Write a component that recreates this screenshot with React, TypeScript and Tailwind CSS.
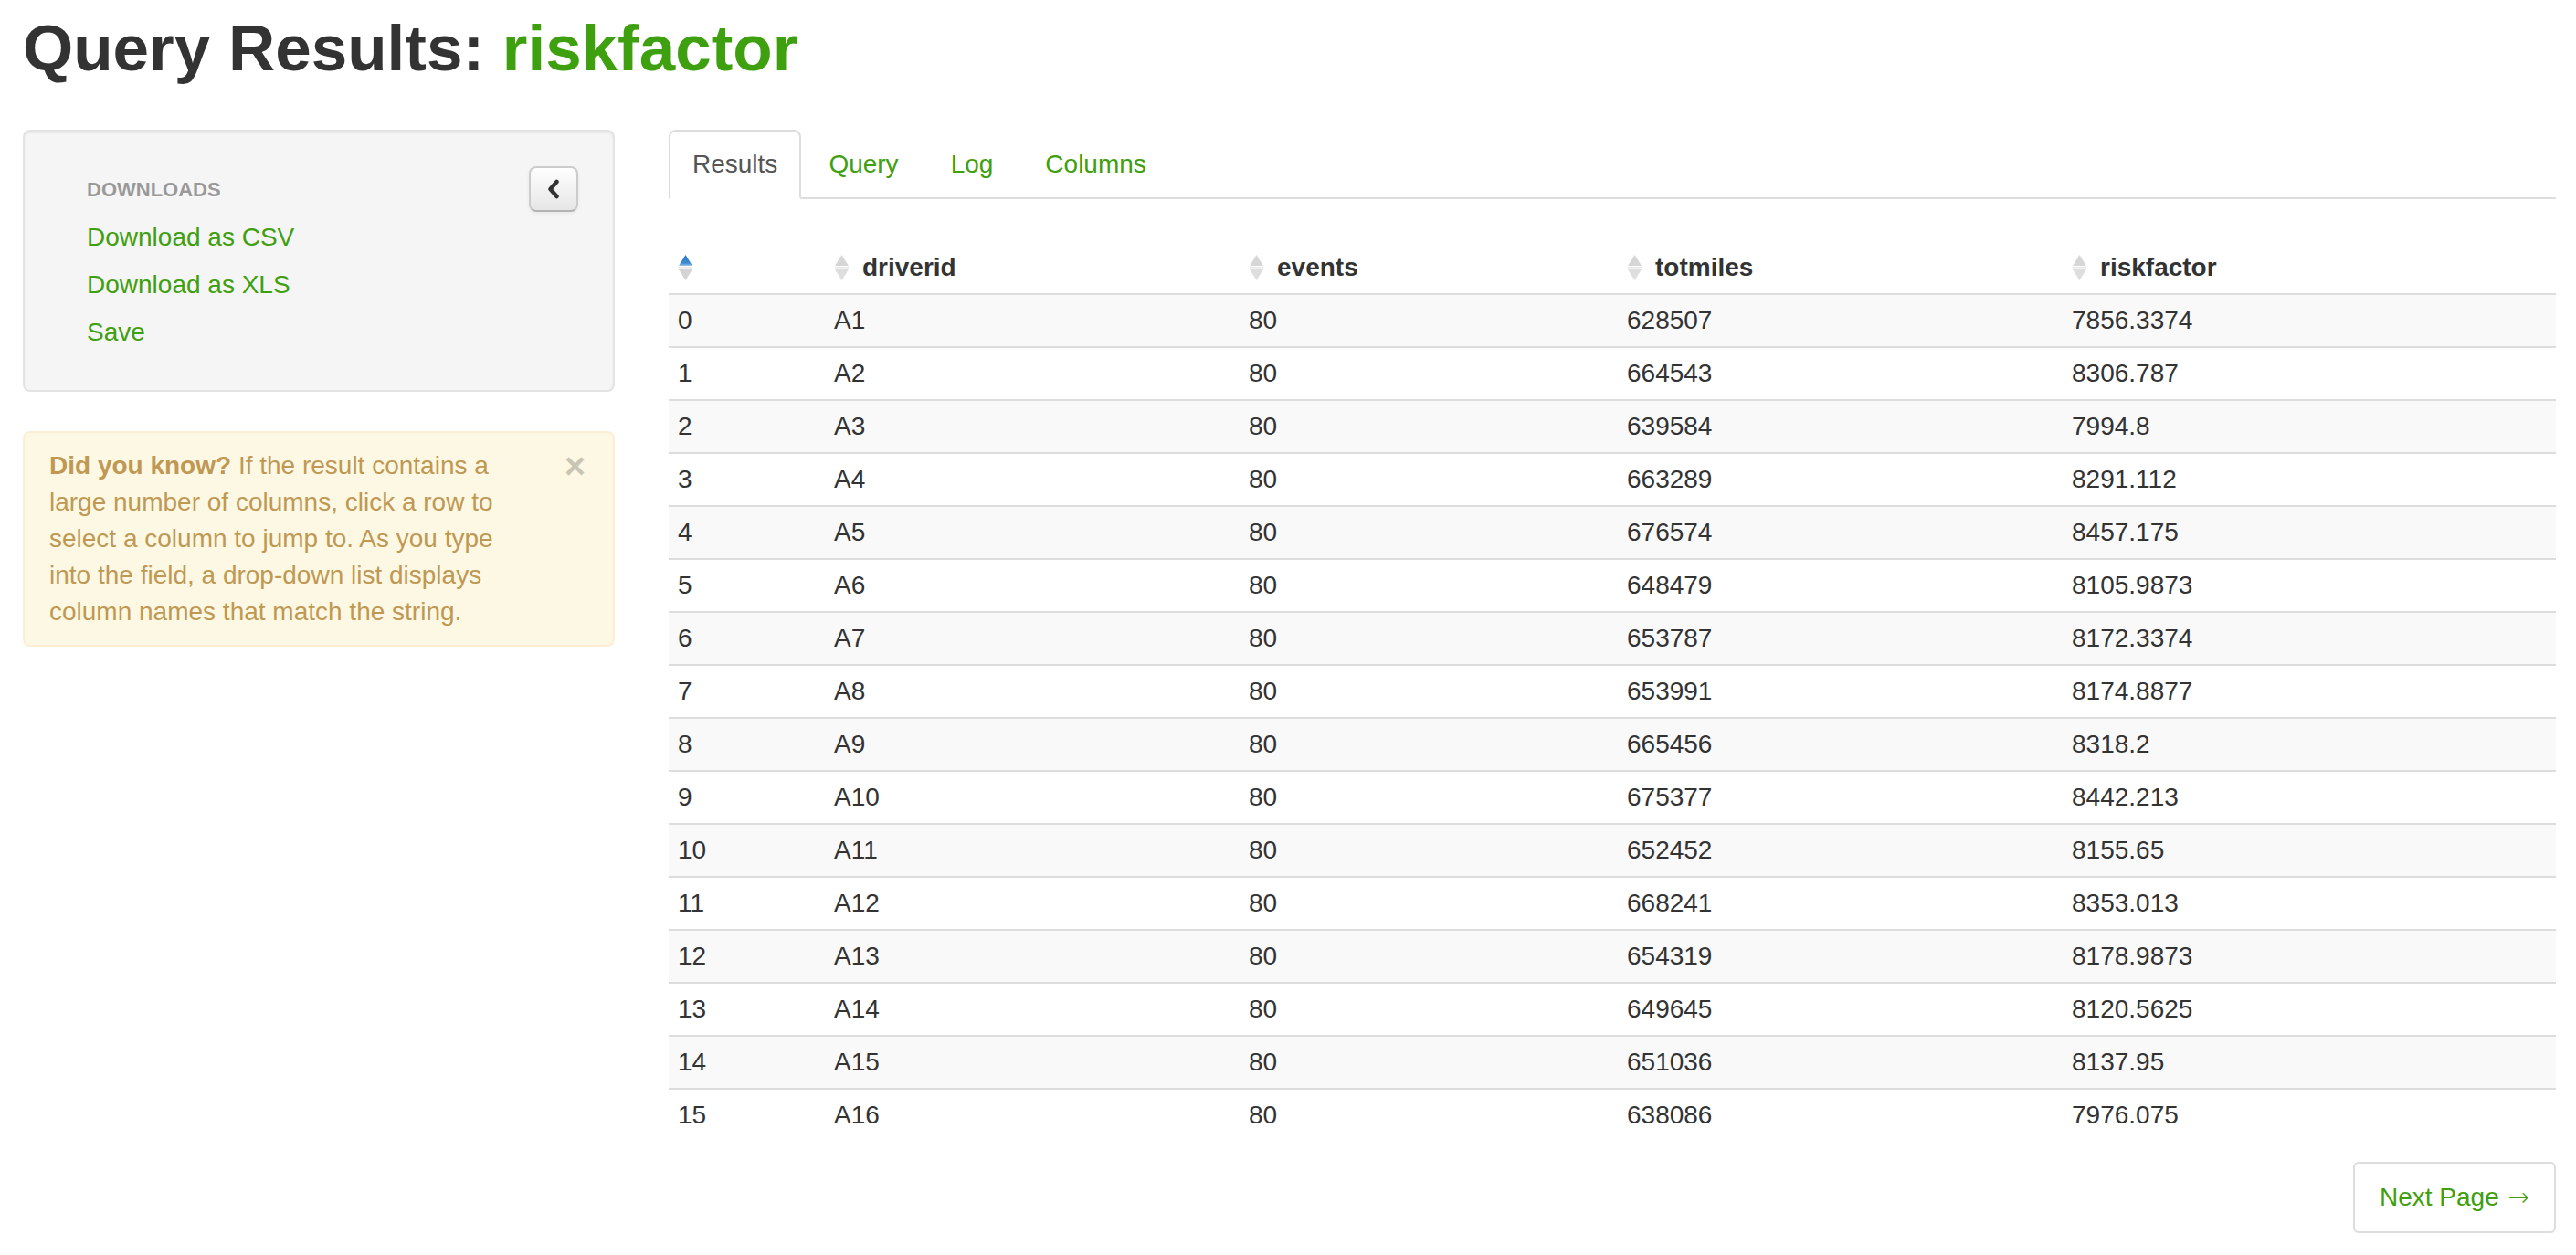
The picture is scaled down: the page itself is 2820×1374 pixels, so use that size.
import React from "react";

const green = "text-[#3fa00f]";

const rows = [
  ["A1", "80", "628507", "7856.3374"],
  ["A2", "80", "664543", "8306.787"],
  ["A3", "80", "639584", "7994.8"],
  ["A4", "80", "663289", "8291.112"],
  ["A5", "80", "676574", "8457.175"],
  ["A6", "80", "648479", "8105.9873"],
  ["A7", "80", "653787", "8172.3374"],
  ["A8", "80", "653991", "8174.8877"],
  ["A9", "80", "665456", "8318.2"],
  ["A10", "80", "675377", "8442.213"],
  ["A11", "80", "652452", "8155.65"],
  ["A12", "80", "668241", "8353.013"],
  ["A13", "80", "654319", "8178.9873"],
  ["A14", "80", "649645", "8120.5625"],
  ["A15", "80", "651036", "8137.95"],
  ["A16", "80", "638086", "7976.075"],
];

const SortIcon = ({ active }: { active?: boolean }) => (
  <svg width="17" height="30" viewBox="0 0 17 30" className="shrink-0">
    <defs>
      <linearGradient id="sortBlue" x1="0" y1="0" x2="0" y2="1">
        <stop offset="0" stopColor="#2a78bd" />
        <stop offset="0.75" stopColor="#3b8bd0" />
        <stop offset="1" stopColor="#9cc3e6" />
      </linearGradient>
    </defs>
    <polygon
      points="8.5,1 16,13 1,13"
      fill={active ? "url(#sortBlue)" : "#d6d6d6"}
    />
    <rect x="1" y="14" width="15" height="1.5" fill="#e6e6e6" />
    <polygon points="1,17 16,17 8.5,29" fill={active ? "#d4d4d4" : "#dedede"} />
  </svg>
);

const columns = [
  { name: "", w: "w-[171px]" },
  { name: "driverid", w: "w-[454px]" },
  { name: "events", w: "w-[414px]" },
  { name: "totmiles", w: "w-[487px]" },
  { name: "riskfactor", w: "" },
];

const App = () => {
  return (
    <div className="min-h-screen bg-white pl-[25px] pr-[22px] font-['Liberation_Sans',Arial,sans-serif] text-[#333] text-[28px] leading-[40px]">
      <h1 className="pt-[13px] text-[71px] leading-[80px] font-bold">
        Query Results: <span className={green}>riskfactor</span>
      </h1>

      <div className="mt-[49px] flex gap-[59px]">
        {/* Sidebar */}
        <div className="w-[648px] shrink-0">
          <div className="flex rounded-[8px] border-2 border-[#e3e3e3] bg-[#f5f5f5] pt-[38px] pb-[37px] pl-[38px] pr-[38px] shadow-[inset_0_2px_2px_rgba(0,0,0,0.05)]">
            <ul className="flex-1">
              <li className="px-[30px] py-[6px] text-[22px] font-bold uppercase text-[#999] [text-shadow:0_1px_0_rgba(255,255,255,0.5)]">
                Downloads
              </li>
              <li>
                <a href="#" className={`block px-[30px] py-[6px] ${green}`}>
                  Download as CSV
                </a>
              </li>
              <li>
                <a href="#" className={`block px-[30px] py-[6px] ${green}`}>
                  Download as XLS
                </a>
              </li>
              <li>
                <a href="#" className={`block px-[30px] py-[6px] ${green}`}>
                  Save
                </a>
              </li>
            </ul>
            <button className="flex h-[50px] w-[54px] shrink-0 items-center justify-center rounded-[8px] border-2 border-[#ccc] border-b-[#b3b3b3] bg-linear-to-b from-white to-[#e6e6e6] shadow-[inset_0_2px_0_rgba(255,255,255,0.2),0_2px_4px_rgba(0,0,0,0.05)]">
              <svg width="16" height="22" viewBox="0 0 16 22">
                <path
                  d="M11.5 3 L4.5 11 L11.5 19"
                  fill="none"
                  stroke="#333"
                  strokeWidth="4.5"
                  strokeLinecap="round"
                  strokeLinejoin="round"
                />
              </svg>
            </button>
          </div>

          <div className="relative mt-[43px] rounded-[8px] border-2 border-[#fbeed5] bg-[#fcf8e3] py-[16px] pl-[27px] pr-[70px] text-[#c09853]">
            <span className="absolute right-[30px] top-[16px] text-[40px] font-bold leading-[40px] text-black opacity-20">
              ×
            </span>
            <p className="whitespace-nowrap">
              <strong>Did you know?</strong> If the result contains a
              <br />
              large number of columns, click a row to
              <br />
              select a column to jump to. As you type
              <br />
              into the field, a drop-down list displays
              <br />
              column names that match the string.
            </p>
          </div>
        </div>

        {/* Main */}
        <div className="min-w-0 flex-1">
          <ul className="flex border-b-2 border-[#ddd]">
            <li className="-mb-[2px] mr-[4px]">
              <a
                href="#"
                className="block rounded-t-[8px] border-2 border-[#ddd] border-b-transparent bg-white px-[24px] py-[16px] text-[#555]"
              >
                Results
              </a>
            </li>
            {["Query", "Log", "Columns"].map((t) => (
              <li key={t} className="-mb-[2px] mr-[5px]">
                <a
                  href="#"
                  className={`block rounded-t-[8px] border-2 border-transparent px-[24px] py-[16px] ${green}`}
                >
                  {t}
                </a>
              </li>
            ))}
          </ul>

          <table className="mt-[47px] w-full table-fixed border-collapse">
            <thead>
              <tr>
                {columns.map((c, i) => (
                  <th
                    key={i}
                    className={`${c.w} px-[10px] py-[8px] text-left align-middle font-bold`}
                  >
                    <div className="flex items-center gap-[14px]">
                      <SortIcon active={i === 0} />
                      {c.name && <span>{c.name}</span>}
                    </div>
                  </th>
                ))}
              </tr>
            </thead>
            <tbody>
              {rows.map((r, i) => (
                <tr
                  key={i}
                  className={`border-t-2 border-[#ddd] ${i % 2 === 0 ? "bg-[#f9f9f9]" : "bg-white"}`}
                >
                  <td className="px-[10px] py-[8px]">{i}</td>
                  {r.map((v, j) => (
                    <td key={j} className="px-[10px] py-[8px]">
                      {v}
                    </td>
                  ))}
                </tr>
              ))}
            </tbody>
          </table>

          <div className="mt-[23px] flex justify-end">
            <a
              href="#"
              className={`block rounded-[6px] border-2 border-[#ddd] bg-white px-[27px] py-[17px] ${green}`}
            >
              Next Page{" "}
              <span className="ml-[2px] font-['DejaVu_Sans',sans-serif] font-light">→</span>
            </a>
          </div>
        </div>
      </div>
    </div>
  );
};

export default App;
